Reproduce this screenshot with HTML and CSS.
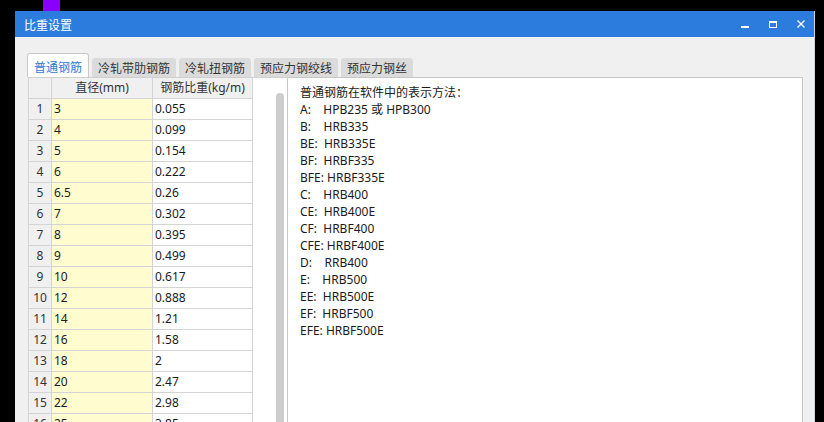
FILE: index.html
```html
<!DOCTYPE html>
<html lang="zh-CN">
<head>
<meta charset="utf-8">
<title>比重设置</title>
<link rel="stylesheet" href="styles.css">
</head>
<body>
<div class="marker"></div>
<div class="window">
  <div class="titlebar">
    <span class="title">比重设置</span>
    <div class="controls">
      <svg width="8" height="8" viewBox="0 0 8 8"><rect x="0" y="6" width="8" height="2" fill="#fff"/></svg>
      <svg width="8" height="8" viewBox="0 0 8 8"><rect x="0.5" y="1.5" width="7" height="6" fill="none" stroke="#fff" stroke-width="1"/><rect x="0" y="1" width="8" height="2" fill="#fff"/></svg>
      <svg width="8" height="8" viewBox="0 0 8 8"><path d="M0.5 0.5 L7.5 7.5 M7.5 0.5 L0.5 7.5" stroke="#fff" stroke-width="1.4" fill="none"/></svg>
    </div>
  </div>
  <div class="body">
    <div class="tabs">
      <div class="tab active">普通钢筋</div>
      <div class="tab">冷轧带肋钢筋</div>
      <div class="tab">冷轧扭钢筋</div>
      <div class="tab">预应力钢绞线</div>
      <div class="tab">预应力钢丝</div>
    </div>
    <div class="content">
      <div class="left">
        <div class="grid">
          <div class="row head"><div class="c n"></div><div class="c h">直径(mm)</div><div class="c h">钢筋比重(kg/m)</div></div>
          <div class="row"><div class="c n">1</div><div class="c d">3</div><div class="c w">0.055</div></div>
          <div class="row"><div class="c n">2</div><div class="c d">4</div><div class="c w">0.099</div></div>
          <div class="row"><div class="c n">3</div><div class="c d">5</div><div class="c w">0.154</div></div>
          <div class="row"><div class="c n">4</div><div class="c d">6</div><div class="c w">0.222</div></div>
          <div class="row"><div class="c n">5</div><div class="c d">6.5</div><div class="c w">0.26</div></div>
          <div class="row"><div class="c n">6</div><div class="c d">7</div><div class="c w">0.302</div></div>
          <div class="row"><div class="c n">7</div><div class="c d">8</div><div class="c w">0.395</div></div>
          <div class="row"><div class="c n">8</div><div class="c d">9</div><div class="c w">0.499</div></div>
          <div class="row"><div class="c n">9</div><div class="c d">10</div><div class="c w">0.617</div></div>
          <div class="row"><div class="c n">10</div><div class="c d">12</div><div class="c w">0.888</div></div>
          <div class="row"><div class="c n">11</div><div class="c d">14</div><div class="c w">1.21</div></div>
          <div class="row"><div class="c n">12</div><div class="c d">16</div><div class="c w">1.58</div></div>
          <div class="row"><div class="c n">13</div><div class="c d">18</div><div class="c w">2</div></div>
          <div class="row"><div class="c n">14</div><div class="c d">20</div><div class="c w">2.47</div></div>
          <div class="row"><div class="c n">15</div><div class="c d">22</div><div class="c w">2.98</div></div>
          <div class="row"><div class="c n">16</div><div class="c d">25</div><div class="c w">3.85</div></div>
          <div class="row"><div class="c n">17</div><div class="c d">28</div><div class="c w">4.83</div></div>
        </div>
        <div class="vscroll"><div class="thumb"></div></div>
      </div>
      <div class="right">
        <div class="desc"><div class="line">普通钢筋在软件中的表示方法：</div><div class="line">A:    HPB235 或 HPB300</div><div class="line">B:    HRB335</div><div class="line">BE:  HRB335E</div><div class="line">BF:  HRBF335</div><div class="line">BFE: HRBF335E</div><div class="line">C:    HRB400</div><div class="line">CE:  HRB400E</div><div class="line">CF:  HRBF400</div><div class="line">CFE: HRBF400E</div><div class="line">D:    RRB400</div><div class="line">E:    HRB500</div><div class="line">EE:  HRB500E</div><div class="line">EF:  HRBF500</div><div class="line">EFE: HRBF500E</div></div>
      </div>
    </div>
  </div>
</div>
</body>
</html>
```

FILE: styles.css
```css
html, body {
  margin: 0;
  padding: 0;
  height: 422px;
  overflow: hidden;
  background: #000;
}
body {
  font-family: "Noto Sans", "Noto Sans CJK SC", sans-serif;
  font-size: 12px;
  color: #1b1b1b;
}
.marker {
  margin-left: 43px;
  width: 17px;
  height: 11px;
  background: #8a00ff;
}
.window {
  margin-left: 15px;
  width: 800px;
  height: 411px;
  box-sizing: border-box;
  background: #f0f0f0;
  border-right: 1px solid #cdd4de;
  display: flex;
  flex-direction: column;
  overflow: hidden;
}
.titlebar {
  height: 26px;
  flex: none;
  background: #2c7cdd;
  display: flex;
  align-items: center;
  padding-left: 9px;
  color: #fff;
}
.title {
  font-family: "Noto Sans CJK SC", sans-serif;
  font-size: 12px;
}
.controls {
  margin-left: auto;
  display: flex;
  align-items: center;
  gap: 20px;
  padding-right: 9px;
}
.controls svg {
  display: block;
}
.body {
  flex: 1;
  padding: 16px 11px 0 12px;
  display: flex;
  flex-direction: column;
  min-height: 0;
}
.tabs {
  display: flex;
  align-items: flex-end;
  gap: 3px;
  height: 24px;
  flex: none;
}
.tab {
  font-family: "Noto Sans CJK SC", sans-serif;
  font-size: 12px;
  height: 19px;
  line-height: 19px;
  padding: 0 6px;
  background: #dbdbdb;
  color: #333;
  border-radius: 3px 3px 0 0;
}
.tab.active {
  height: 24px;
  line-height: 25px;
  box-sizing: border-box;
  background: #fff;
  color: #2b7bd6;
  border: 1px solid #c9c9c9;
  border-bottom: none;
}
.content {
  flex: 1;
  display: flex;
  margin-left: 1px;
  min-height: 0;
}
.left {
  width: 259px;
  flex: none;
  background: #fff;
  border-top: 1px solid #cfcfcf;
  display: flex;
}
.grid {
  width: 225px;
  flex: none;
  box-sizing: border-box;
  border-left: 1px solid #d4d4d4;
}
.row {
  display: grid;
  grid-template-columns: 23px 101px 100px;
}
.c {
  box-sizing: border-box;
  height: 21px;
  line-height: 20px;
  border-right: 1px solid #d4d4d4;
  border-bottom: 1px solid #d4d4d4;
  white-space: nowrap;
  overflow: hidden;
}
.c.n {
  background: #f0f0f0;
  text-align: center;
  color: #333;
}
.c.h {
  background: #f0f0f0;
  text-align: center;
  color: #333;
}
.c.d {
  background: #fffdd0;
  padding-left: 2px;
}
.c.w {
  padding-left: 2px;
}
.vscroll {
  margin-left: 23px;
  width: 8px;
  flex: none;
}
.thumb {
  margin-top: 15px;
  height: 400px;
  background: #cdcdcd;
  border-radius: 4px 4px 0 0;
}
.right {
  flex: 1;
  background: #fff;
  border: 1px solid #c8c8c8;
  border-bottom: none;
}
.desc {
  padding: 6px 0 0 12px;
}
.line {
  height: 17px;
  line-height: 17px;
  white-space: pre;
}
```
